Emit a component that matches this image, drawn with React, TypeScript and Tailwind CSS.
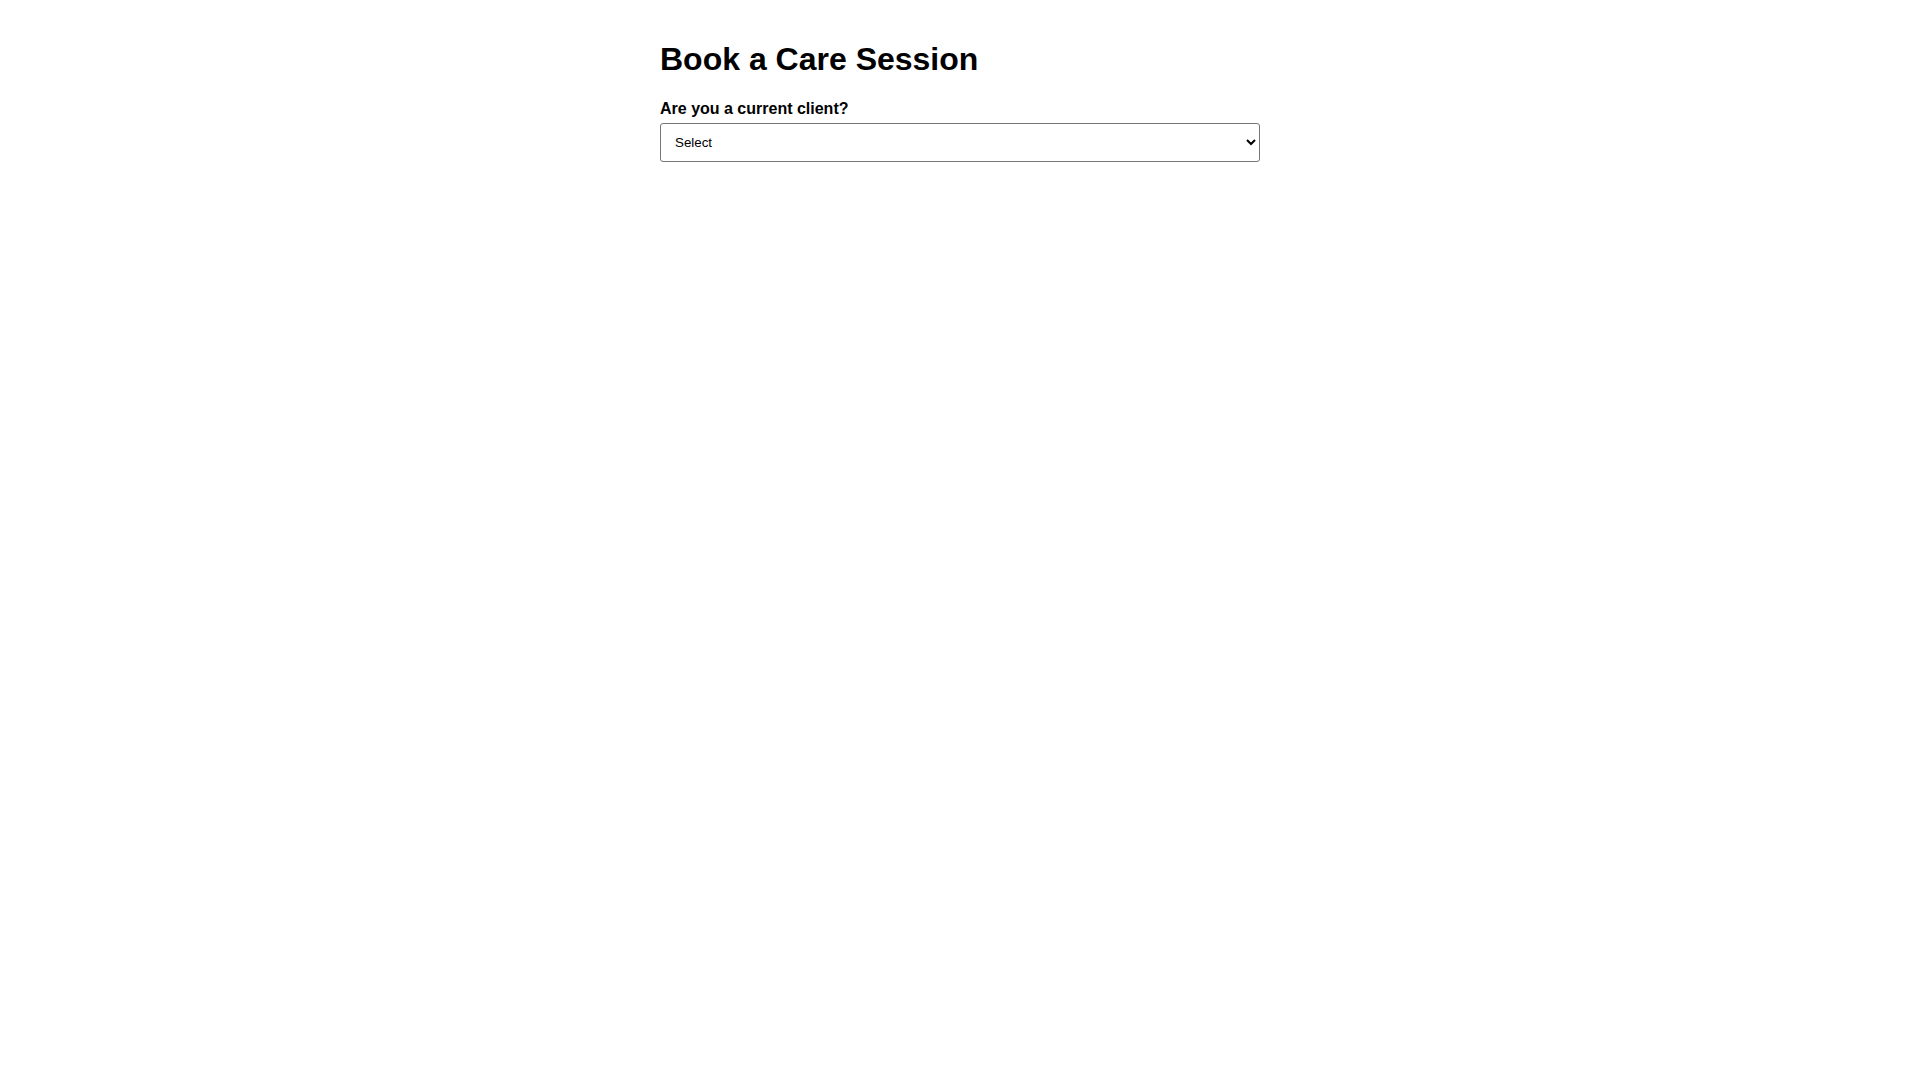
import { useState } from 'react';

// Booking form
export default function App() {
  const [client, setClient] = useState('');

  return (
    <div className="min-h-screen bg-white text-black" style={{ fontFamily: '"Liberation Sans", Arial, sans-serif' }}>
      <div className="mx-auto max-w-[600px] pt-[41px]">
        <h1 className="text-[32px] font-bold leading-[37px]">Book a Care Session</h1>
        <form className="mt-[22px]">
          <label htmlFor="client" className="block text-[16px] font-bold leading-[18px] mb-[5px]">
            Are you a current client?
          </label>
          <select
            id="client"
            value={client}
            onChange={(e) => setClient(e.target.value)}
            className="w-full h-[39px] border border-[#767676] rounded-[3px] bg-white pl-[10px] pr-[6px] text-[13.33px]"
          >
            <option value="">Select</option>
            <option value="yes">Yes</option>
            <option value="no">No</option>
          </select>
        </form>
      </div>
    </div>
  );
}
